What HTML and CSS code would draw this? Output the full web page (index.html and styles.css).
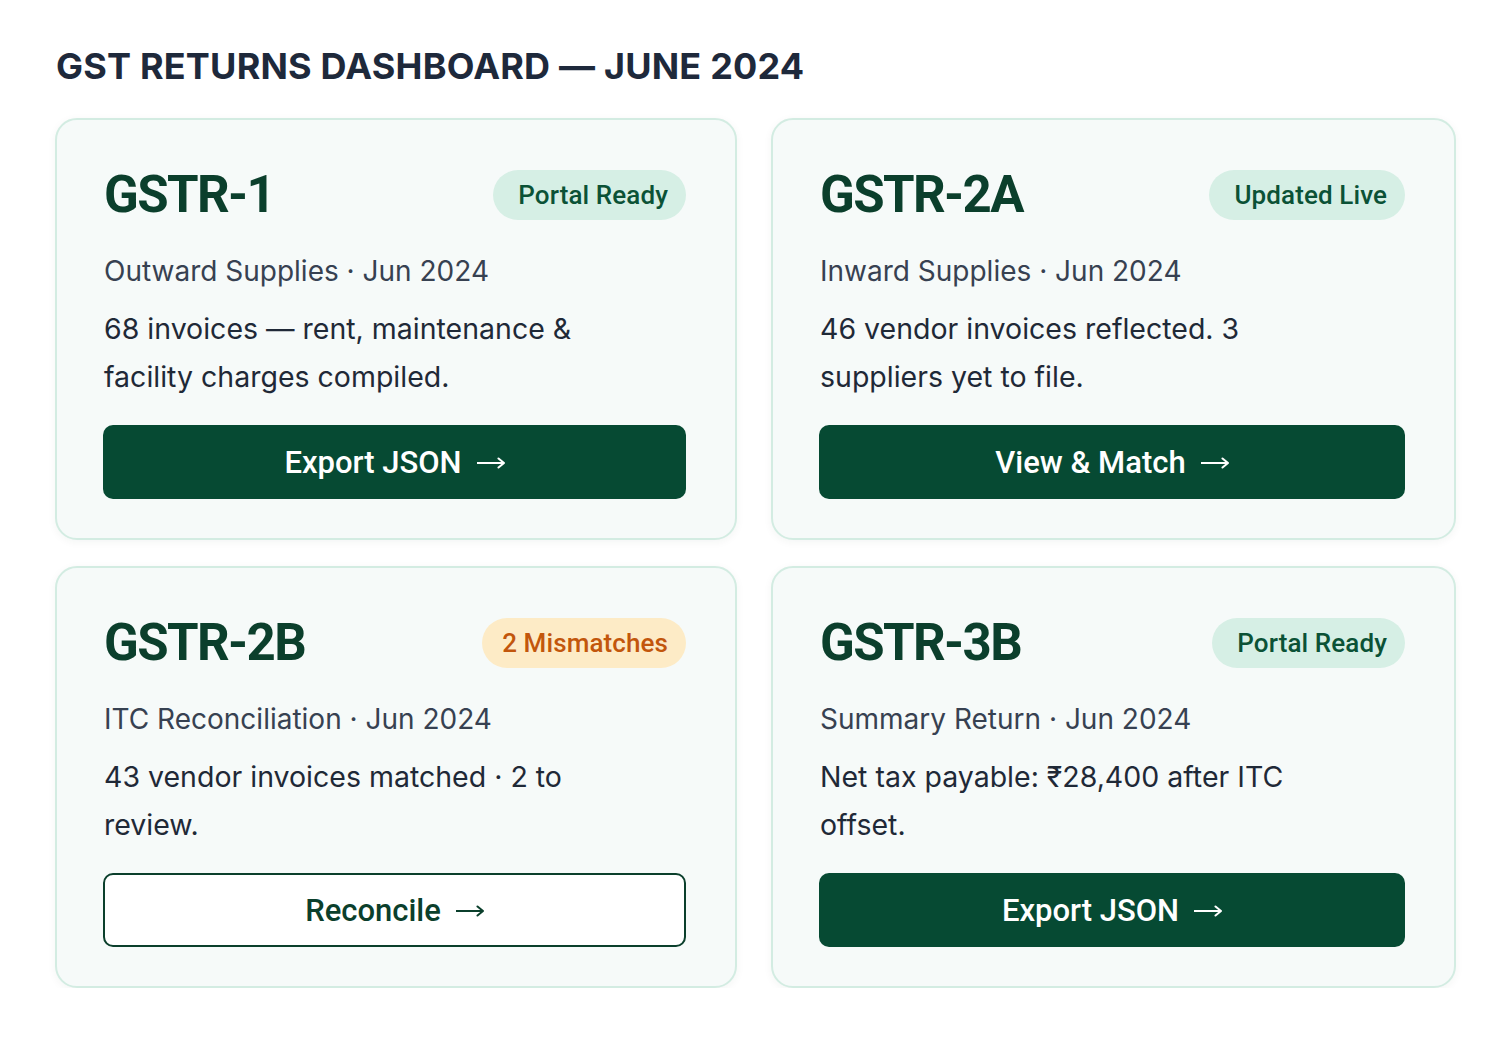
FILE: index.html
```html
<!DOCTYPE html>
<html lang="en">
<head>
<meta charset="utf-8">
<title>GST Returns Dashboard</title>
<link rel="stylesheet" href="styles.css">
</head>
<body>
<main class="page">
  <h1 class="page-title">GST RETURNS DASHBOARD — JUNE 2024</h1>
  <section class="grid">
    <article class="card">
      <header class="card-head">
        <h2 class="card-title">GSTR-1</h2>
        <span class="badge badge-green">Portal Ready</span>
      </header>
      <p class="card-sub">Outward Supplies · Jun 2024</p>
      <p class="card-desc">68 invoices — rent, maintenance &amp; facility charges compiled.</p>
      <button class="btn btn-solid">Export JSON <svg class="arrow" viewBox="0 0 28 12" aria-hidden="true"><path d="M0 6H27M21.5 1.5L27 6L21.5 10.5"/></svg></button>
    </article>
    <article class="card">
      <header class="card-head">
        <h2 class="card-title">GSTR-2A</h2>
        <span class="badge badge-green">Updated Live</span>
      </header>
      <p class="card-sub">Inward Supplies · Jun 2024</p>
      <p class="card-desc">46 vendor invoices reflected. 3 suppliers yet to file.</p>
      <button class="btn btn-solid">View &amp; Match <svg class="arrow" viewBox="0 0 28 12" aria-hidden="true"><path d="M0 6H27M21.5 1.5L27 6L21.5 10.5"/></svg></button>
    </article>
    <article class="card">
      <header class="card-head">
        <h2 class="card-title">GSTR-2B</h2>
        <span class="badge badge-amber">2 Mismatches</span>
      </header>
      <p class="card-sub">ITC Reconciliation · Jun 2024</p>
      <p class="card-desc">43 vendor invoices matched · 2 to review.</p>
      <button class="btn btn-outline">Reconcile <svg class="arrow" viewBox="0 0 28 12" aria-hidden="true"><path d="M0 6H27M21.5 1.5L27 6L21.5 10.5"/></svg></button>
    </article>
    <article class="card">
      <header class="card-head">
        <h2 class="card-title">GSTR-3B</h2>
        <span class="badge badge-green">Portal Ready</span>
      </header>
      <p class="card-sub">Summary Return · Jun 2024</p>
      <p class="card-desc">Net tax payable: ₹28,400 after ITC offset.</p>
      <button class="btn btn-solid">Export JSON <svg class="arrow" viewBox="0 0 28 12" aria-hidden="true"><path d="M0 6H27M21.5 1.5L27 6L21.5 10.5"/></svg></button>
    </article>
  </section>
</main>
</body>
</html>
```
FILE: styles.css
```css
* { box-sizing: border-box; }
html, body { margin: 0; padding: 0; background: #ffffff; }
body {
  font-family: Inter, "Noto Sans", "DejaVu Sans", sans-serif;
  color: #1f2937;
}
.page {
  padding: 42px 56px 0 55px;
  width: 1512px;
}
.page-title {
  margin: 0 0 28px 1px;
  font-size: 36px;
  font-weight: 700;
  letter-spacing: 0.2px;
  color: #1e293b;
  line-height: 48px;
}
.grid {
  display: grid;
  grid-template-columns: 682px 685px;
  column-gap: 34px;
  row-gap: 26px;
}
.card {
  background: #f6faf9;
  border: 2px solid #d3ece2;
  border-radius: 22px;
  padding: 48px 49px 39px 46px;
  box-shadow: 0 2px 8px rgba(15, 60, 40, 0.05);
  display: flex;
  flex-direction: column;
}
.card-head {
  display: flex;
  justify-content: space-between;
  align-items: center;
  height: 54px;
}
.card-title {
  margin: 0 0 0 1px;
  font-family: Roboto, Inter, sans-serif;
  font-size: 51px;
  font-weight: 700;
  color: #0b3f2c;
  letter-spacing: -1.6px;
  line-height: 54px;
}
.badge {
  height: 50px;
  padding: 0 18px 0 25px;
  border-radius: 25px;
  display: inline-flex;
  align-items: center;
  font-family: Roboto, Inter, sans-serif;
  font-size: 26px;
  font-weight: 500;
  letter-spacing: 0.1px;
}
.badge-green { background: #d6efe5; color: #0b5236; }
.badge-amber { background: #fdebc6; color: #c2560c; padding: 0 18px 0 20px; }
.card-sub {
  margin: 29px 0 0 1px;
  font-size: 28px;
  line-height: 40px;
  color: #374151;
}
.card-desc {
  margin: 14px 0 0 1px;
  font-size: 28.5px;
  line-height: 48px;
  color: #1f2937;
  max-width: 490px;
}
.btn {
  margin-top: 24px;
  height: 74px;
  width: 100%;
  border-radius: 10px;
  font-family: Roboto, Inter, sans-serif;
  font-size: 31px;
  font-weight: 500;
  display: flex;
  align-items: center;
  justify-content: center;
  gap: 15px;
  cursor: pointer;
}
.btn-solid {
  background: #064a33;
  color: #ffffff;
  border: none;
}
.btn-outline {
  background: #ffffff;
  color: #0b3f2c;
  border: 2px solid #0b3f2c;
}
.arrow {
  width: 28px;
  height: 12px;
  fill: none;
  stroke: currentColor;
  stroke-width: 2;
  stroke-linecap: round;
  stroke-linejoin: round;
  margin-top: 2px;
}
```
